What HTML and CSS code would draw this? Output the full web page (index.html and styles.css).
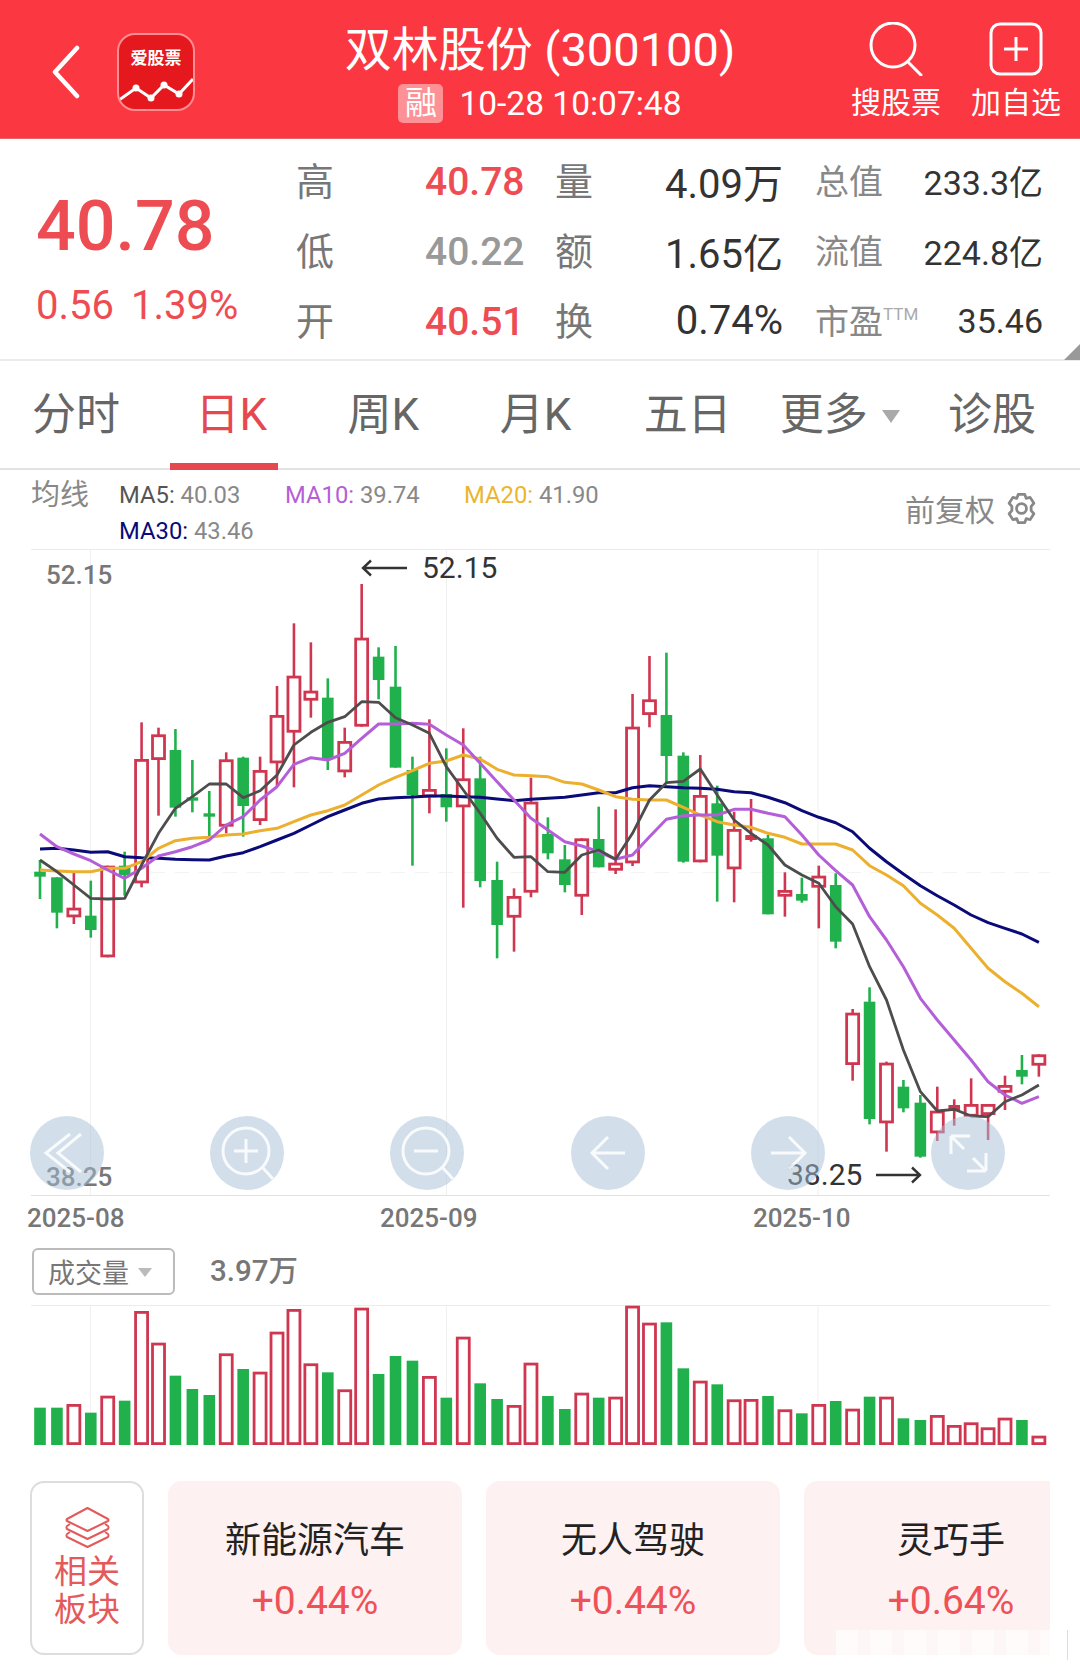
FILE: index.html
```html
<!DOCTYPE html>
<html lang="zh-CN">

<head>
    <meta charset="UTF-8">
    <meta name="viewport" content="width=device-width, initial-scale=1.0">
    <title>双林股份 (300100)</title>
    <link rel="stylesheet" href="styles.css">
</head>

<body>
    <header class="top-bar">
        <div class="top-left">
            <svg class="back-icon" width="28" height="54" viewBox="0 0 28 54">
                <path d="M25 3 L3 27 L25 51" fill="none" stroke="#fff" stroke-width="4.5" stroke-linecap="round" stroke-linejoin="round" />
            </svg>
            <div class="logo">
                <span class="logo-text">爱股票</span>
                <svg class="logo-line" width="74" height="30" viewBox="0 0 74 30">
                    <polyline points="0,27 17,15 32,25 45,12 60,21 74,6" fill="none" stroke="#fff" stroke-width="3" />
                    <circle cx="17" cy="15" r="3.5" fill="#fff" />
                    <circle cx="32" cy="25" r="3.5" fill="#fff" />
                    <circle cx="45" cy="12" r="3.5" fill="#fff" />
                    <circle cx="60" cy="21" r="3.5" fill="#fff" />
                </svg>
            </div>
        </div>
        <div class="title-box">
            <h1 class="title">双林股份 (300100)</h1>
            <div class="sub-title">
                <span class="rong">融</span>
                <span>10-28 10:07:48</span>
            </div>
        </div>
        <div class="top-tools">
            <div class="tool">
                <svg width="56" height="54" viewBox="0 0 56 54">
                    <circle cx="25" cy="23" r="22" fill="none" stroke="#fff" stroke-width="3" />
                    <path d="M40 40 L53 53" fill="none" stroke="#fff" stroke-width="3" stroke-linecap="round" />
                </svg>
                <span>搜股票</span>
            </div>
            <div class="tool">
                <svg width="54" height="54" viewBox="0 0 54 54">
                    <rect x="2" y="2" width="50" height="50" rx="9" fill="none" stroke="#fff" stroke-width="3" />
                    <path d="M27 15 V39 M15 27 H39" fill="none" stroke="#fff" stroke-width="3" />
                </svg>
                <span>加自选</span>
            </div>
        </div>
    </header>

    <section class="quote">
        <div class="price-box">
            <div class="price">40.78</div>
            <div class="change"><span>0.56</span><span>1.39%</span></div>
        </div>
        <div class="quote-grid">
            <div class="cell"><span class="label">高</span><span class="value up">40.78</span></div>
            <div class="cell"><span class="label">量</span><span class="num">4.09万</span></div>
            <div class="cell small"><span class="label">总值</span><span class="num">233.3亿</span></div>

            <div class="cell"><span class="label">低</span><span class="value down">40.22</span></div>
            <div class="cell"><span class="label">额</span><span class="num">1.65亿</span></div>
            <div class="cell small"><span class="label">流值</span><span class="num">224.8亿</span></div>

            <div class="cell"><span class="label">开</span><span class="value up">40.51</span></div>
            <div class="cell"><span class="label">换</span><span class="num">0.74%</span></div>
            <div class="cell small"><span class="label">市盈<sup class="ttm">TTM</sup></span><span class="num">35.46</span></div>
        </div>
        <span class="corner"></span>
    </section>

    <nav class="tabs">
        <div class="tab">分时</div>
        <div class="tab active">日K</div>
        <div class="tab">周K</div>
        <div class="tab">月K</div>
        <div class="tab">五日</div>
        <div class="tab">更多<i class="tri"></i></div>
        <div class="tab">诊股</div>
    </nav>

    <div class="ma-head">
        <div class="ma-title">均线</div>
        <div class="ma-list">
            <span class="ma5">MA5: <em>40.03</em></span>
            <span class="ma10">MA10: <em>39.74</em></span>
            <span class="ma20">MA20: <em>41.90</em></span>
            <span class="ma30">MA30: <em>43.46</em></span>
        </div>
        <div class="adjust">
            <span>前复权</span>
            <svg width="33" height="33" viewBox="0 0 24 24" fill="none" stroke="#888" stroke-width="2" stroke-linejoin="round">
                <path d="M9.6 1.8 H14.4 L15.4 4.6 L18.3 3.9 L21 8.2 L19 10.4 V13.6 L21 15.8 L18.3 20.1 L15.4 19.4 L14.4 22.2 H9.6 L8.6 19.4 L5.7 20.1 L3 15.8 L5 13.6 V10.4 L3 8.2 L5.7 3.9 L8.6 4.6 Z" />
                <circle cx="12" cy="12" r="3.6" />
            </svg>
        </div>
    </div>

    <div class="chart">
        <svg id="kline" width="1080" height="648" viewBox="0 549 1080 648"></svg>
        <span class="tag tag-high">52.15</span>
        <span class="tag tag-low">38.25</span>
        <div class="mark mark-high">
            <svg width="46" height="18" viewBox="0 0 46 18">
                <path d="M46 9 H2 M10 1.5 L2 9 L10 16.5" fill="none" stroke="#333" stroke-width="2.4" />
            </svg>
            <span>52.15</span>
        </div>
        <div class="mark mark-low">
            <span>38.25</span>
            <svg width="46" height="18" viewBox="0 0 46 18">
                <path d="M0 9 H44 M36 1.5 L44 9 L36 16.5" fill="none" stroke="#333" stroke-width="2.4" />
            </svg>
        </div>
        <div class="chart-tools">
            <div class="round">
                <svg width="74" height="74" viewBox="0 0 74 74">
                    <path d="M40 18 L16 37 L40 56 M51 18 L28 37 L51 56" />
                </svg>
            </div>
            <div class="round">
                <svg width="74" height="74" viewBox="0 0 74 74">
                    <circle cx="36" cy="35" r="23" />
                    <path d="M53 52 L63 63 M36 23 V47 M24 35 H48" />
                </svg>
            </div>
            <div class="round">
                <svg width="74" height="74" viewBox="0 0 74 74">
                    <circle cx="36" cy="35" r="23" />
                    <path d="M53 52 L63 63 M24 35 H48" />
                </svg>
            </div>
            <div class="round">
                <svg width="74" height="74" viewBox="0 0 74 74">
                    <path d="M54 37 H21 M37 21 L21 37 L37 53" />
                </svg>
            </div>
            <div class="round">
                <svg width="74" height="74" viewBox="0 0 74 74">
                    <path d="M20 37 H54 M38 21 L54 37 L38 53" />
                </svg>
            </div>
            <div class="round">
                <svg width="74" height="74" viewBox="0 0 74 74">
                    <path d="M20 20 L33 33 M20 20 H39 M20 20 V38 M55 55 L42 42 M55 55 H36 M55 55 V37" />
                </svg>
            </div>
        </div>
    </div>

    <div class="dates">
        <span class="d1">2025-08</span>
        <span class="d2">2025-09</span>
        <span>2025-10</span>
    </div>

    <div class="vol-head">
        <div class="vol-select">成交量<i class="tri small-tri"></i></div>
        <div class="vol-value">3.97万</div>
    </div>

    <svg id="volume" class="vol-chart" width="1080" height="145" viewBox="0 1305 1080 145"></svg>

    <div class="sectors">
        <div class="sector-btn">
            <svg width="45" height="41" viewBox="0 0 45 41" fill="none" stroke="#e45a5a" stroke-width="2" stroke-linejoin="round">
                <path d="M22.5 1 L43 12 Q44 13 43 14 L22.5 24 L2 14 Q1 13 2 12 Z" />
                <path d="M5 17 L2 19 Q1 20.5 2 22 L22.5 32 L43 22 Q44 20.5 43 19 L40 17" />
                <path d="M5 25 L2 27 Q1 28.5 2 30 L22.5 40 L43 30 Q44 28.5 43 27 L40 25" />
            </svg>
            <span>相关<br>板块</span>
        </div>
        <div class="sector-card">
            <div class="sector-name">新能源汽车</div>
            <div class="sector-pct">+0.44%</div>
        </div>
        <div class="sector-card">
            <div class="sector-name">无人驾驶</div>
            <div class="sector-pct">+0.44%</div>
        </div>
        <div class="sector-card">
            <div class="sector-name">灵巧手</div>
            <div class="sector-pct">+0.64%</div>
        </div>
    </div>
    <div class="watermark"></div>

    <script src="chart.js"></script>
</body>

</html>
```

FILE: styles.css
```css
* {
    margin: 0;
    padding: 0;
    box-sizing: border-box;
}

body {
    position: relative;
    width: 1080px;
    height: 1671px;
    overflow: hidden;
    background-color: #fff;
    font-family: Roboto, "Noto Sans CJK SC", sans-serif;
    color: #333;
}

/* top bar */
.top-bar {
    display: grid;
    grid-template-columns: 1fr auto 1fr;
    height: 139px;
    background-color: #fb3741;
    border-bottom: 1px solid #e5676c;
    color: #fff;
}

.top-left {
    display: flex;
    align-items: flex-start;
    padding: 33px 0 0 52px;
}

.back-icon {
    margin-top: 12px;
}

.logo {
    position: relative;
    width: 78px;
    height: 78px;
    margin-left: 37px;
    border: 2.5px solid #ff8d92;
    border-radius: 18px;
    background-color: #e5191d;
    overflow: hidden;
    text-align: center;
}

.logo-text {
    display: block;
    margin-top: 12px;
    font-size: 17px;
    line-height: 22px;
    font-weight: 700;
}

.logo-line {
    display: block;
    margin-top: 4px;
}

.title-box {
    text-align: center;
}

.title {
    margin-top: 23px;
    font-size: 47px;
    line-height: 54px;
    font-weight: 400;
    white-space: nowrap;
}

.sub-title {
    display: flex;
    justify-content: center;
    align-items: center;
    gap: 16px;
    margin-top: 7px;
    font-size: 33.5px;
    line-height: 39px;
}

.rong {
    width: 45px;
    height: 39px;
    border-radius: 5px;
    background-color: rgba(255, 255, 255, 0.45);
    font-size: 32px;
}

.top-tools {
    display: flex;
    justify-content: flex-end;
    gap: 30px;
    padding: 22px 19px 0 0;
}

.tool {
    display: flex;
    flex-direction: column;
    align-items: center;
    font-size: 30px;
    line-height: 36px;
    white-space: nowrap;
}

.tool span {
    margin-top: 9px;
}

/* quote */
.quote {
    position: relative;
    display: flex;
    height: 222px;
    border-bottom: 2px solid #ececec;
}

.price-box {
    width: 296px;
    padding-left: 36px;
    color: #ee4c53;
}

.price {
    margin-top: 47px;
    font-size: 70px;
    line-height: 80px;
    font-weight: 500;
}

.change {
    display: flex;
    gap: 17px;
    margin-top: 18px;
    font-size: 40px;
    line-height: 44px;
}

.quote-grid {
    display: grid;
    grid-template-columns: 227px 228px 228px;
    grid-auto-rows: 70px;
    column-gap: 32px;
    padding-top: 8px;
}

.cell {
    display: flex;
    justify-content: space-between;
    align-items: center;
}

.label {
    margin-bottom: 7px;
    font-size: 38px;
    color: #777;
}

.value {
    width: 98px;
    font-size: 39px;
    font-weight: 500;
    white-space: nowrap;
}

.up {
    color: #ee4c53;
}

.down {
    color: #999;
}

.num {
    margin-bottom: 3px;
    font-size: 40px;
    white-space: nowrap;
}

.small .label {
    margin-bottom: 5px;
    font-size: 34px;
    color: #888;
}

.small .num {
    font-size: 34px;
}

.ttm {
    font-size: 17px;
    line-height: 0;
    color: #aaa;
    vertical-align: 14px;
}

.corner {
    position: absolute;
    right: 0;
    bottom: -1px;
    border-style: solid;
    border-width: 0 0 16px 16px;
    border-color: transparent transparent #999 transparent;
}

/* tabs */
.tabs {
    display: flex;
    width: 1080px;
    height: 109px;
    padding-right: 12px;
    border-bottom: 2px solid #e2e2e2;
}

.tab {
    position: relative;
    display: flex;
    flex: 1;
    justify-content: center;
    padding-top: 28px;
    font-size: 44px;
    line-height: 52px;
    color: #666;
}

.tab.active {
    padding-left: 3px;
    color: #e5494f;
}

.tab.active::after {
    content: "";
    position: absolute;
    left: calc(50% - 60px);
    bottom: -2px;
    width: 108px;
    height: 7px;
    background-color: #e5494f;
}

.tri {
    width: 0;
    height: 0;
    margin: 21px 0 0 14px;
    border-style: solid;
    border-width: 13px 9px 0 9px;
    border-color: #aaa transparent transparent transparent;
}

/* moving averages */
.ma-head {
    display: flex;
    height: 79px;
    padding: 7px 42px 0 31px;
}

.ma-title {
    width: 88px;
    font-size: 29px;
    line-height: 36px;
    color: #888;
}

.ma-list {
    display: grid;
    grid-template-columns: 166px 179px auto;
    grid-auto-rows: 36px;
    align-items: center;
    font-size: 23.8px;
}

.ma-list em {
    font-style: normal;
    color: #888;
}

.ma5 {
    color: #555;
}

.ma10 {
    color: #b55fd6;
}

.ma20 {
    color: #eab62f;
}

.ma30 {
    color: #0a0a78;
}

.adjust {
    display: flex;
    align-items: center;
    gap: 10px;
    height: 36px;
    margin: 13px 0 0 auto;
    font-size: 30px;
    color: #888;
}

/* kline chart */
.chart {
    position: relative;
    height: 648px;
}

.chart > svg {
    display: block;
}

.tag {
    position: absolute;
    left: 46px;
    font-size: 26px;
    line-height: 30px;
    font-weight: 500;
    color: #777;
}

.tag-high {
    top: 11px;
}

.tag-low {
    top: 613px;
}

.mark {
    position: absolute;
    display: flex;
    align-items: center;
    font-size: 30px;
    line-height: 34px;
    color: #333;
}

.mark-high {
    top: 2px;
    left: 361px;
    gap: 15px;
}

.mark-low {
    top: 609px;
    left: 787px;
    gap: 14px;
}

.chart-tools {
    position: absolute;
    left: 30px;
    right: 75px;
    bottom: 7px;
    display: flex;
    justify-content: space-between;
}

.round {
    width: 74px;
    height: 74px;
    border-radius: 50%;
    background-color: rgba(165, 192, 216, 0.5);
}

.round svg {
    display: block;
    fill: none;
    stroke: #fff;
    stroke-width: 3;
    opacity: 0.85;
}

.dates {
    display: flex;
    height: 51px;
    padding-left: 27px;
    font-size: 26px;
    line-height: 43px;
    font-weight: 500;
    color: #777;
}

.d1 {
    width: 353px;
}

.d2 {
    width: 373px;
}

/* volume */
.vol-head {
    display: flex;
    align-items: flex-start;
    height: 57px;
    padding-left: 32px;
}

.vol-select {
    display: flex;
    align-items: center;
    width: 143px;
    height: 47px;
    padding-left: 14px;
    border: 2px solid #bbb;
    border-radius: 6px;
    font-size: 27px;
    color: #777;
}

.small-tri {
    margin: 2px 0 0 9px;
    border-width: 9px 7px 0 7px;
    border-top-color: #bbb;
}

.vol-value {
    margin-left: 35px;
    font-size: 29.5px;
    line-height: 46px;
    font-weight: 500;
    color: #777;
}

.vol-chart {
    display: block;
}

/* sectors */
.sectors {
    display: flex;
    gap: 24px;
    width: 1020px;
    height: 174px;
    margin: 31px 0 0 30px;
    overflow: hidden;
}

.sector-btn {
    display: flex;
    flex: 0 0 114px;
    flex-direction: column;
    align-items: center;
    padding-top: 24px;
    border: 2px solid #ddd;
    border-radius: 14px;
    font-size: 33px;
    line-height: 38px;
    color: #e45a5a;
}

.sector-btn span {
    margin-top: 5px;
    text-align: center;
}

.sector-card {
    display: flex;
    flex: 0 0 294px;
    flex-direction: column;
    align-items: center;
    padding-top: 38px;
    border-radius: 14px;
    background-color: #fdf1f1;
}

.sector-name {
    font-size: 36px;
    line-height: 44px;
    color: #222;
}

.sector-pct {
    margin-top: 16px;
    font-size: 39px;
    line-height: 44px;
    color: #ee5257;
}

.watermark {
    position: absolute;
    left: 836px;
    top: 1630px;
    width: 232px;
    height: 30px;
    border-right: 1px solid #ddd;
    background: repeating-linear-gradient(90deg, rgba(255, 255, 255, 0.7) 0 22px, rgba(255, 255, 255, 0.4) 22px 34px);
}
```

FILE: chart.js
```js
const RED = "#cf3650";
const GREEN = "#20b14c";
const SVG_NS = "http://www.w3.org/2000/svg";

// x of the candle number i
function xAt(i) {
    return 40 + 16.93 * i;
}

// values were read off at 3x from the top of the block
function px(base, v) {
    return base + v / 3;
}

// type (r hollow, R solid, g green), body top, body bottom, high, low
const candles = [
    ["g", 935, 950, 900, 1017], ["g", 952, 1058, 952, 1105], ["r", 1043, 1072, 935, 1092], ["g", 1067, 1110, 962, 1133],
    ["r", 917, 1192, 917, 1192], ["g", 917, 945, 875, 1007], ["r", 597, 970, 487, 982], ["r", 523, 600, 503, 767],
    ["g", 570, 743, 507, 770], ["g", 712, 722, 600, 757], ["g", 760, 770, 693, 830], ["r", 598, 800, 577, 820],
    ["g", 593, 738, 590, 830], ["r", 630, 783, 590, 795], ["r", 465, 610, 378, 680], ["r", 347, 518, 190, 682],
    ["r", 392, 422, 247, 473], ["g", 413, 597, 355, 630], ["r", 543, 637, 503, 652], ["r", 233, 500, 72, 500],
    ["g", 290, 360, 262, 418], ["g", 380, 623, 258, 623], ["g", 630, 705, 590, 917], ["r", 687, 712, 478, 760],
    ["g", 702, 742, 565, 785], ["r", 655, 742, 505, 1043], ["g", 655, 963, 590, 982], ["g", 960, 1095, 905, 1195],
    ["r", 1008, 1073, 985, 1175], ["r", 725, 998, 653, 1012],
    ["g", 822, 880, 772, 898], ["g", 898, 975, 855, 997], ["r", 835, 1010, 835, 1065], ["g", 837, 922, 740, 922],
    ["r", 908, 932, 748, 942], ["r", 500, 910, 402, 918], ["r", 418, 465, 288, 502], ["g", 465, 588, 278, 670],
    ["g", 587, 905, 577, 908], ["r", 705, 907, 585, 907], ["g", 730, 887, 677, 1025], ["r", 807, 928, 755, 1027],
    ["R", 825, 840, 717, 845], ["g", 835, 1063, 825, 1063], ["r", 990, 1010, 937, 1070], ["g", 1002, 1022, 953, 1028],
    ["r", 947, 983, 917, 1105], ["g", 975, 1145, 940, 1165],
    ["r", 1358, 1515, 1347, 1562], ["g", 1325, 1677, 1282, 1693], ["r", 1508, 1690, 1505, 1775], ["g", 1580, 1645, 1560, 1657],
    ["g", 1628, 1790, 1605, 1793], ["r", 1652, 1720, 1580, 1743], ["R", 1635, 1652, 1618, 1697], ["r", 1632, 1670, 1555, 1670],
    ["r", 1632, 1665, 1632, 1740], ["r", 1575, 1598, 1547, 1650], ["g", 1530, 1550, 1485, 1573], ["r", 1483, 1517, 1483, 1550]
];

const ma5 = [900, 935, 975, 1015, 1017, 1015, 915, 820, 745, 710, 672, 672, 713, 692, 645, 555, 517, 487, 470, 425, 427, 473, 495, 520, 620, 690, 760, 835, 892, 890,
    935, 937, 885, 870, 898, 820, 720, 668, 664, 627, 705, 780, 820, 855, 915, 945, 970, 1040, 1092, 1220,
    1320, 1470, 1595, 1653, 1648, 1668, 1670, 1625, 1605, 1575];
const ma10 = [822, 860, 882, 902, 930, 955, 925, 888, 875, 860, 840, 795, 770, 720, 680, 613, 593, 600, 580, 535, 492, 492, 490, 493, 525, 555, 610, 665, 720, 775,
    810, 845, 858, 875, 898, 885, 830, 778, 767, 765, 765, 748, 748, 760, 770, 825, 885, 932, 975, 1070, 1140, 1220,
    1315, 1380, 1440, 1500, 1565, 1605, 1630, 1610];
const ma20 = [930, 933, 935, 935, 925, 925, 905, 865, 842, 835, 832, 825, 822, 812, 805, 785, 765, 752, 735, 705, 675, 652, 632, 610, 603, 585, 597, 628, 645, 647,
    650, 667, 672, 690, 710, 718, 720, 720, 742, 765, 785, 795, 802, 820, 832, 852, 852, 852, 870, 917, 945, 977, 1030, 1065, 1105, 1165, 1225, 1265, 1300, 1340];
const ma30 = [867, 865, 870, 877, 875, 890, 893, 895, 898, 899, 900, 888, 878, 860, 840, 820, 795, 770, 750, 730, 717, 713, 711, 708, 708, 710, 712, 717, 722, 718,
    715, 712, 705, 698, 698, 683, 677, 680, 683, 685, 688, 695, 698, 712, 728, 752, 772, 788, 815, 865, 905, 942, 977, 1007, 1035, 1065, 1088, 1105, 1122, 1147];

// volume bar tops, bottom edge is 1445
const volumes = [
    ["g", 353], ["g", 353], ["r", 342], ["g", 368], ["r", 317], ["g", 332], ["r", 63], ["r", 158], ["g", 257], ["g", 297],
    ["g", 315], ["r", 190], ["g", 237], ["r", 245], ["r", 125], ["r", 57], ["r", 220], ["g", 247], ["r", 298], ["r", 53],
    ["g", 252], ["g", 198], ["g", 212], ["r", 258], ["g", 323], ["r", 140], ["g", 280], ["g", 327], ["r", 345], ["r", 218],
    ["g", 318], ["g", 357], ["r", 308], ["g", 323], ["r", 320], ["r", 47], ["r", 98], ["g", 97], ["g", 235], ["r", 272],
    ["g", 283], ["r", 328], ["r", 327], ["g", 318], ["r", 358], ["g", 370], ["r", 342], ["g", 333], ["r", 356], ["g", 320],
    ["r", 320], ["g", 385], ["g", 390], ["r", 375], ["r", 405], ["r", 397], ["r", 412], ["r", 383], ["g", 390], ["r", 437]
];

function add(svg, tag, attrs) {
    const el = document.createElementNS(SVG_NS, tag);
    for (const key in attrs) {
        el.setAttribute(key, attrs[key]);
    }
    svg.appendChild(el);
}

function drawBar(svg, x, top, bottom, type) {
    if (type === "r") {
        add(svg, "rect", { x: x - 6, y: top + 1.4, width: 12, height: Math.max(bottom - top - 2.8, 1), fill: "#fff", stroke: RED, "stroke-width": 2.8 });
    } else {
        add(svg, "rect", { x: x - 5.8, y: top, width: 11.6, height: bottom - top, fill: type === "R" ? RED : GREEN });
    }
}

function drawLine(svg, values, color, width) {
    const points = values.map((v, i) => xAt(i).toFixed(1) + "," + px(560, v).toFixed(1)).join(" ");
    add(svg, "polyline", { points: points, fill: "none", stroke: color, "stroke-width": width, "stroke-linejoin": "round" });
}

function drawGrid(svg, top, bottom) {
    [90.5, 446.5, 818].forEach(x => {
        add(svg, "line", { x1: x, x2: x, y1: top, y2: bottom, stroke: "#f0f0f0", "stroke-width": 1 });
    });
}

function drawKline() {
    const svg = document.getElementById("kline");
    drawGrid(svg, 549, 1196);
    add(svg, "line", { x1: 31, x2: 1050, y1: 549.5, y2: 549.5, stroke: "#ececec", "stroke-width": 1 });
    add(svg, "line", { x1: 31, x2: 1050, y1: 1195.5, y2: 1195.5, stroke: "#e2e2e2", "stroke-width": 1 });
    add(svg, "line", { x1: 31, x2: 1050, y1: 872.5, y2: 872.5, stroke: "#f3f3f3", "stroke-width": 1, "stroke-dasharray": "14 10" });

    candles.forEach((c, i) => {
        const x = xAt(i);
        add(svg, "line", { x1: x, x2: x, y1: px(560, c[3]), y2: px(560, c[4]), stroke: c[0] === "g" ? GREEN : RED, "stroke-width": 2.6 });
        drawBar(svg, x, px(560, c[1]), px(560, c[2]), c[0]);
    });

    drawLine(svg, ma30, "#0a0a78", 3);
    drawLine(svg, ma20, "#ecb02e", 3);
    drawLine(svg, ma10, "#b45fd8", 3);
    drawLine(svg, ma5, "#4d4d4d", 2.8);
}

function drawVolume() {
    const svg = document.getElementById("volume");
    drawGrid(svg, 1305, 1445);
    add(svg, "line", { x1: 31, x2: 1050, y1: 1305.5, y2: 1305.5, stroke: "#ececec", "stroke-width": 1 });
    volumes.forEach((v, i) => {
        drawBar(svg, xAt(i), px(1290, v[1]), 1445, v[0]);
    });
}

drawKline();
drawVolume();
```
